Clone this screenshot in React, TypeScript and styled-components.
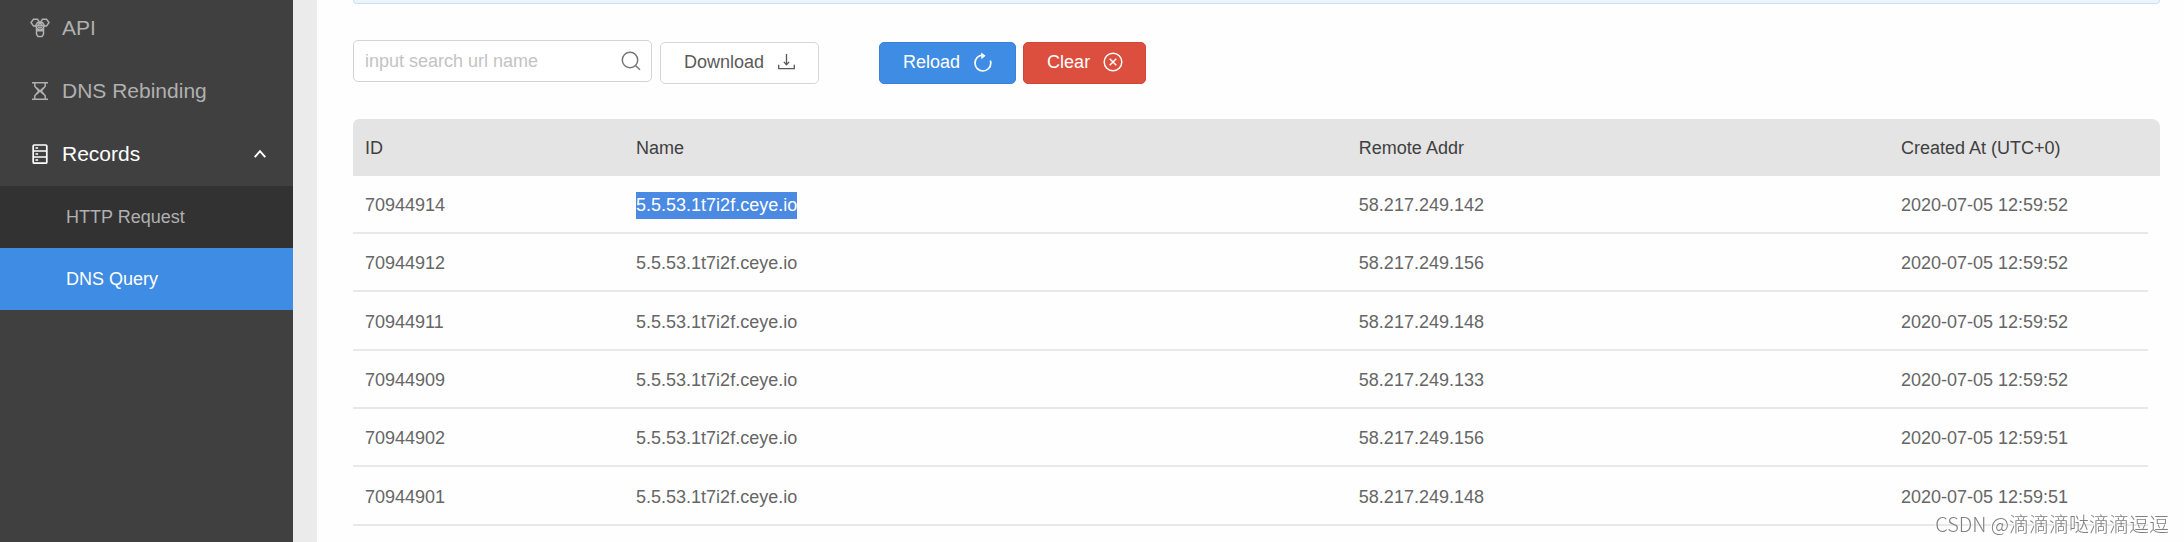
import React from "react";
import styled, { createGlobalStyle, css } from "styled-components";

const GlobalStyle = createGlobalStyle`
  * { box-sizing: border-box; }
  body {
    margin: 0;
    background: #ebebeb;
    color: #666;
    font-family: "Liberation Sans", Arial, "Noto Sans CJK SC", sans-serif;
    font-size: 18px;
    line-height: 24px;
  }
`;

const Page = styled.div`
  display: flex;
  gap: 24px;
  min-height: 100vh;
`;

const Sidebar = styled.aside`
  flex: 0 0 293px;
  background: #404040;
  overflow: hidden;
`;

const Nav = styled.nav`
  display: flex;
  flex-direction: column;
  margin-top: -3px;
`;

const menuItem = css`
  display: flex;
  align-items: center;
  width: 100%;
  border: 0;
  font-family: inherit;
  text-decoration: none;
  cursor: pointer;
`;

const navItem = css`
  ${menuItem}
  gap: 12px;
  height: 63px;
  padding: 0 26px 2px 30px;
  background: transparent;
  color: #b0b0b0;
  font-size: 21px;
`;

const NavLink = styled.a`
  ${navItem}
`;

const NavToggle = styled.button`
  ${navItem}
  color: #fff;
`;

const NavText = styled.span`
  flex: 1;
  text-align: left;
`;

const SubMenu = styled.div`
  background: #323232;
`;

const SubLink = styled.a<{ $active?: boolean }>`
  ${menuItem}
  height: 62px;
  padding-left: 66px;
  background: ${(p) => (p.$active ? "#3f8ce4" : "transparent")};
  color: ${(p) => (p.$active ? "#fff" : "#b0b0b0")};
`;

const Main = styled.main`
  flex: 1;
  min-width: 0;
  padding: 0 24px 0 36px;
  background: #fefefe;
`;

const Notice = styled.div`
  height: 4px;
  border: 1px solid #cfe0f0;
  border-top: 0;
  border-radius: 0 0 6px 6px;
  background: #eaf4fe;
`;

const Toolbar = styled.div`
  display: flex;
  height: 44px;
  margin: 36px 0 35px;
`;

const SearchBox = styled.label`
  display: flex;
  align-items: center;
  width: 299px;
  height: 42px;
  margin-right: 8px;
  padding: 0 10px 0 11px;
  border: 1px solid #d3d3d3;
  border-radius: 5px;
  background: #fff;
  color: #777;
`;

const SearchInput = styled.input`
  flex: 1;
  min-width: 0;
  padding: 0;
  border: 0;
  outline: 0;
  background: transparent;
  color: #555;
  font: inherit;
  &::placeholder { color: #c3c3c3; opacity: 1; }
`;

const tones = {
  plain: { bg: "#fff", border: "#d6d6d6", color: "#5a5a5a" },
  primary: { bg: "#3f8ce4", border: "#3b82d6", color: "#fff" },
  danger: { bg: "#dc4e3e", border: "#d14737", color: "#fff" },
};

const Button = styled.button<{ $tone: keyof typeof tones }>`
  display: flex;
  align-items: center;
  align-self: flex-end;
  gap: 13px;
  height: 42px;
  padding: 0 22px 3px 23px;
  border: 1px solid ${(p) => tones[p.$tone].border};
  border-radius: 5px;
  background: ${(p) => tones[p.$tone].bg};
  color: ${(p) => tones[p.$tone].color};
  font: inherit;
  cursor: pointer;
`;

const Actions = styled.div`
  display: flex;
  gap: 7px;
  margin-left: 60px;
`;

const Table = styled.table`
  width: 100%;
  table-layout: fixed;
  border-collapse: separate;
  border-spacing: 0;
  text-align: left;
`;

const HeadCell = styled.th<{ $width: string }>`
  width: ${(p) => p.$width};
  height: 57px;
  padding: 0 12px;
  background: #e4e4e4;
  color: #404040;
  font-weight: 400;
  &:first-child { border-top-left-radius: 6px; }
  &:last-child { border-top-right-radius: 8px; }
`;

const Row = styled.tr`
  height: 58px;
  &:nth-child(3n) { height: 59px; }
`;

const Cell = styled.td`
  padding: 0 12px;
  background: linear-gradient(#e8e8e8, #e8e8e8) left bottom / 100% 2px no-repeat;
  &:last-child { background-size: calc(100% - 12px) 2px; }
`;

const Selected = styled.mark`
  display: inline-block;
  padding: 1px 0 2px;
  background: #4a8ae2;
  color: #fff;
`;

const Watermark = styled.div`
  position: fixed;
  right: 15px;
  bottom: 6px;
  color: #808080;
  font-family: "Noto Sans CJK SC", sans-serif;
  font-size: 20px;
  font-weight: 300;
  text-shadow: -1px -1px 0 #fff;
`;

const Icon = ({ size, children, w = 1.5 }: { size: number; w?: number; children: React.ReactNode }) => (
  <svg
    width={size}
    height={size}
    viewBox="0 0 20 20"
    fill="none"
    stroke="currentColor"
    strokeWidth={w}
    aria-hidden="true"
  >
    {children}
  </svg>
);

const ApiIcon = () => (
  <Icon size={20}>
    <path d="M3.5 1.2h4l2.2 3.3-2.2 3.6h-4L1 4.5zM12.5 1.2h4L19 4.5l-2.5 3.6h-4l-2.2-3.6z" />
    <path d="M7.5 4.6h5l2 3.2-2 3.4h-5l-2-3.4zM6.5 10v6.2L8 18.6h4l1.5-2.4V10M6.5 12.8h7" />
    <path d="M8 7.2h4M8 9.2h4" />
  </Icon>
);

const HourglassIcon = () => (
  <Icon size={20}>
    <path d="M2 1.8h16M2 18.2h16M4.8 2v3.2l4 4.8-4 4.8V18M15.2 2v3.2l-4 4.8 4 4.8V18M6.5 6.7l7 6.6M13.5 6.7l-7 6.6" />
  </Icon>
);

const RecordsIcon = () => (
  <Icon size={20} w={1.7}>
    <rect x="3.2" y="1" width="13.6" height="18.2" rx="1" />
    <path d="M3.2 7h13.6M3.2 13h13.6M5.5 4h2.6M5.5 10h2.6M5.5 16h2.6" />
  </Icon>
);

const ChevronUp = () => (
  <Icon size={14} w={2.8}>
    <path d="M2.5 14.5 10 6l7.5 8.5" />
  </Icon>
);

const SearchIcon = () => (
  <Icon size={20}>
    <circle cx="9" cy="9" r="7.7" />
    <path d="m14.5 14.5 4.5 4.3" />
  </Icon>
);

const DownloadIcon = () => (
  <Icon size={19} w={1.4}>
    <path d="M1.8 13.5v4h16.4v-4M10 2v11M7.2 10.4l2.8 3 2.8-3" />
  </Icon>
);

const ReloadIcon = () => (
  <Icon size={20} w={1.7}>
    <path d="M10.2 3.2C5 3 2 7 2 11a7.8 7.8 0 0 0 15.8.2c0-1-.1-1.700-.5-2.600" />
    <path d="M8.200.4 12.600 3.700 8.400 7.200z" fill="currentColor" stroke="none" />
  </Icon>
);

const ClearIcon = () => (
  <Icon size={20}>
    <circle cx="10" cy="10" r="8.8" />
    <path d="m6.7 6.7 6.6 6.6M13.3 6.7l-6.6 6.6" />
  </Icon>
);

const columns = [
  { title: "ID", width: "15%" },
  { title: "Name", width: "40%" },
  { title: "Remote Addr", width: "30%" },
  { title: "Created At (UTC+0)", width: "15%" },
];

const host = "5.5.53.1t7i2f.ceye.io";

const records = [
  { id: "70944914", addr: "58.217.249.142", at: "2020-07-05 12:59:52", selected: true },
  { id: "70944912", addr: "58.217.249.156", at: "2020-07-05 12:59:52" },
  { id: "70944911", addr: "58.217.249.148", at: "2020-07-05 12:59:52" },
  { id: "70944909", addr: "58.217.249.133", at: "2020-07-05 12:59:52" },
  { id: "70944902", addr: "58.217.249.156", at: "2020-07-05 12:59:51" },
  { id: "70944901", addr: "58.217.249.148", at: "2020-07-05 12:59:51" },
];

export default function App() {
  return (
    <>
      <GlobalStyle />
      <Page>
        <Sidebar>
          <Nav>
            <NavLink href="#api"><ApiIcon /><NavText>API</NavText></NavLink>
            <NavLink href="#rebinding"><HourglassIcon /><NavText>DNS Rebinding</NavText></NavLink>
            <NavToggle type="button" aria-expanded="true">
              <RecordsIcon /><NavText>Records</NavText><ChevronUp />
            </NavToggle>
            <SubMenu>
              <SubLink href="#http">HTTP Request</SubLink>
              <SubLink href="#dns" $active aria-current="page">DNS Query</SubLink>
            </SubMenu>
          </Nav>
        </Sidebar>
        <Main>
          <Notice />
          <Toolbar>
            <SearchBox>
              <SearchInput type="text" placeholder="input search url name" aria-label="Search url name" />
              <SearchIcon />
            </SearchBox>
            <Button type="button" $tone="plain">Download <DownloadIcon /></Button>
            <Actions>
              <Button type="button" $tone="primary">Reload <ReloadIcon /></Button>
              <Button type="button" $tone="danger">Clear <ClearIcon /></Button>
            </Actions>
          </Toolbar>
          <Table>
            <thead>
              <tr>
                {columns.map((c) => (
                  <HeadCell key={c.title} $width={c.width} scope="col">{c.title}</HeadCell>
                ))}
              </tr>
            </thead>
            <tbody>
              {records.map((r) => (
                <Row key={r.id}>
                  <Cell>{r.id}</Cell>
                  <Cell>{r.selected ? <Selected>{host}</Selected> : host}</Cell>
                  <Cell>{r.addr}</Cell>
                  <Cell>{r.at}</Cell>
                </Row>
              ))}
            </tbody>
          </Table>
        </Main>
      </Page>
      <Watermark>CSDN @滴滴滴哒滴滴逗逗</Watermark>
    </>
  );
}
